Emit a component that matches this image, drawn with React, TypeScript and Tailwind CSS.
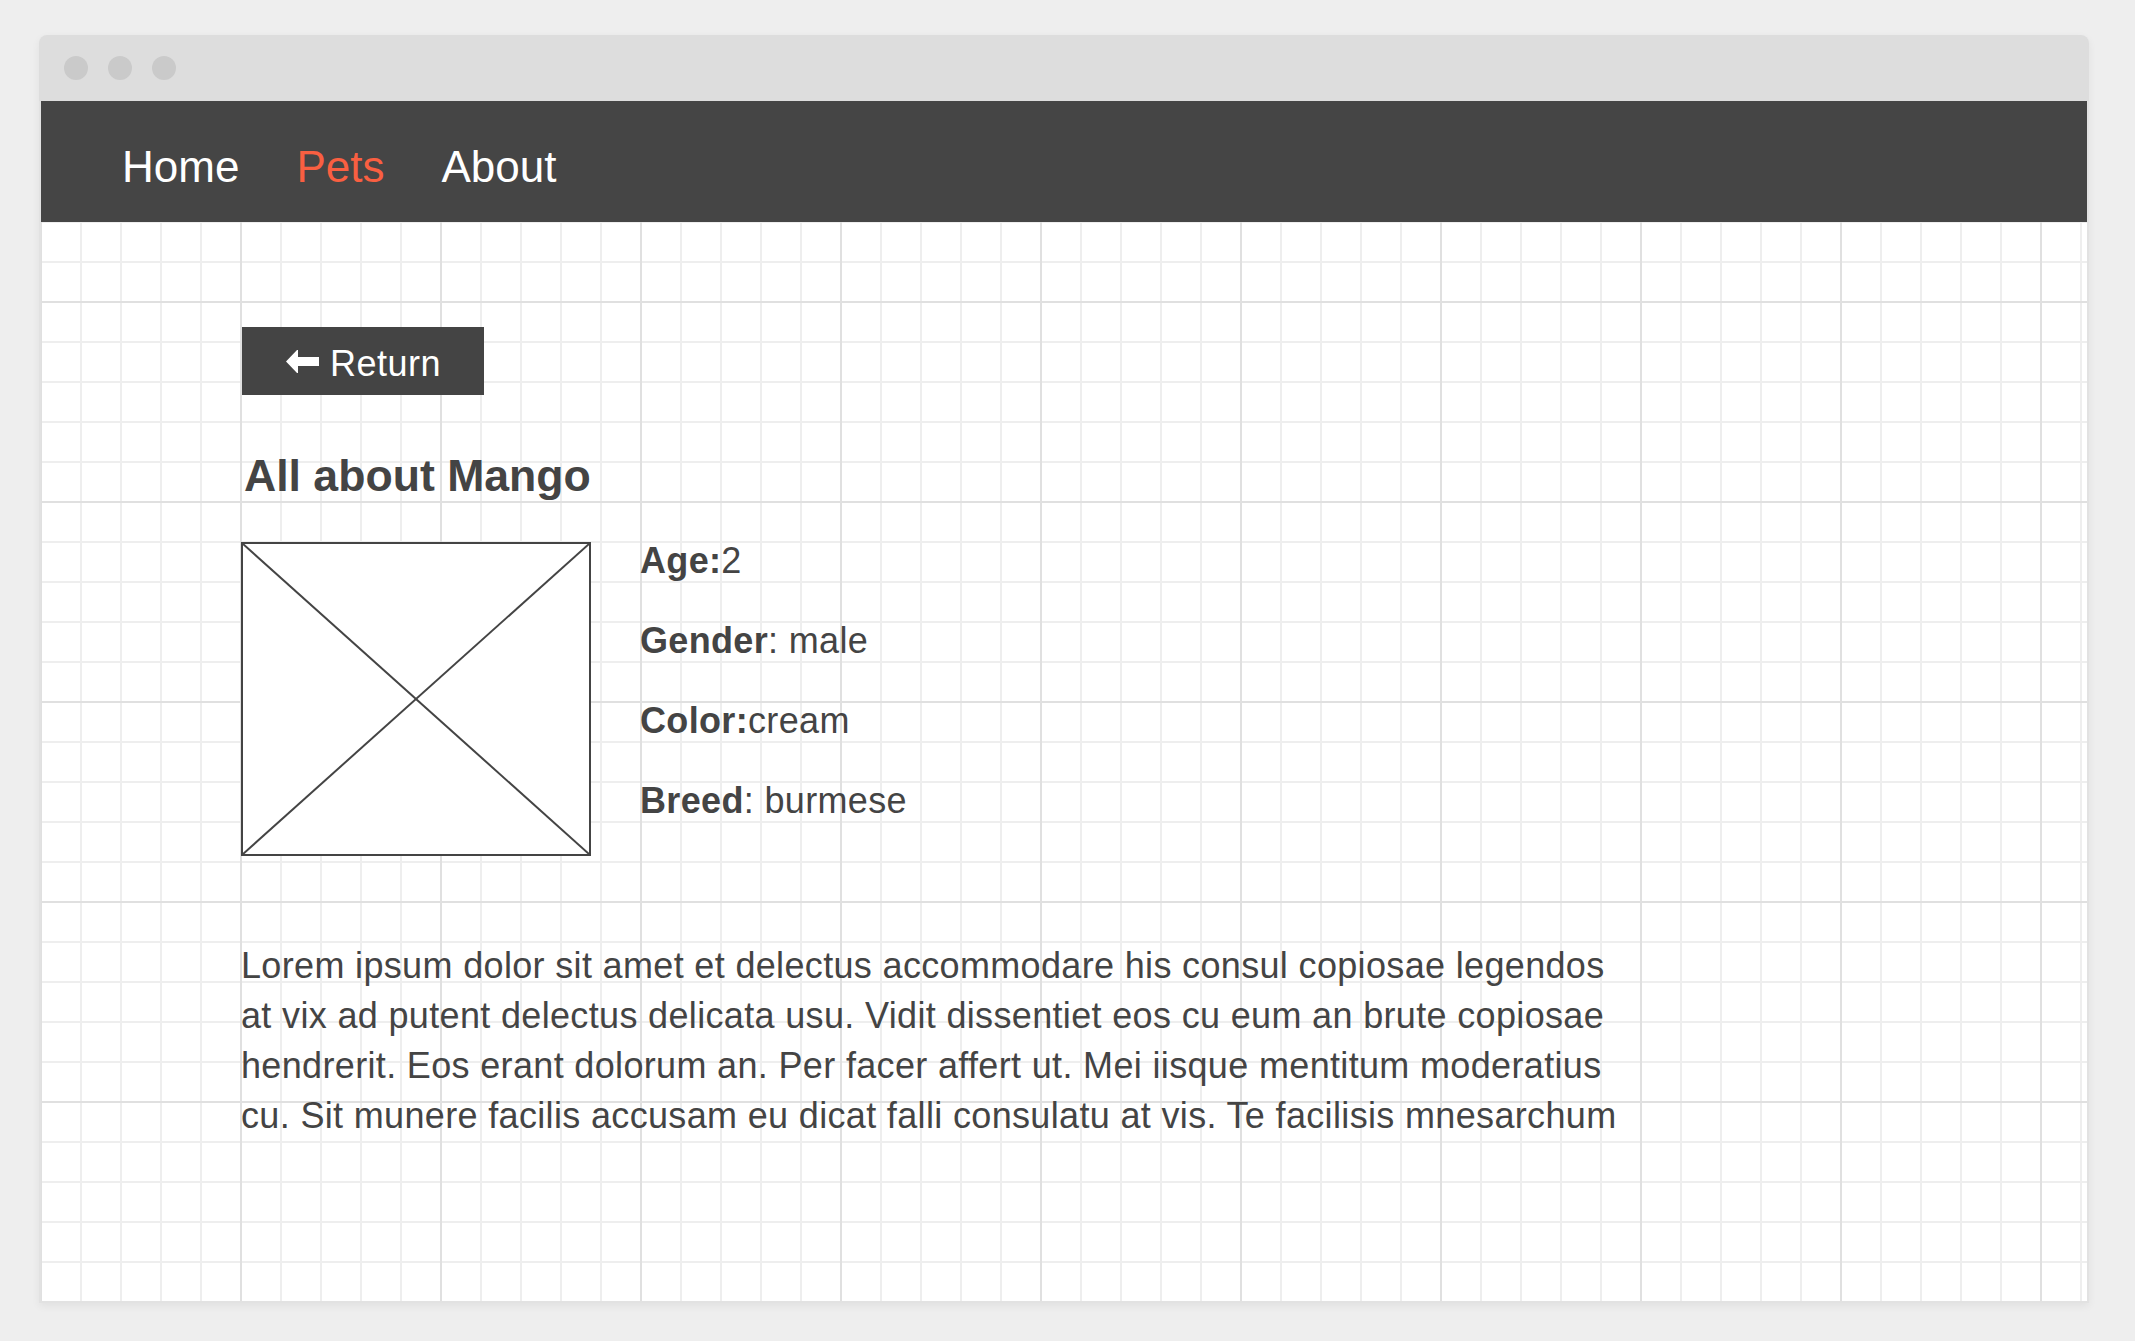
import React from 'react';

const details = [
  { label: 'Age:', value: '2' },
  { label: 'Gender', value: ': male' },
  { label: 'Color:', value: 'cream' },
  { label: 'Breed', value: ': burmese' },
];

const ArrowLeft = () => (
  <svg width="33" height="25" viewBox="0 0 33 25" fill="#ffffff" aria-hidden="true">
    <polygon points="0,12.5 11,1 12,1 12,8 33,8 33,17 12,17 12,24 11,24" />
  </svg>
);

const App: React.FC = () => {
  return (
    <div
      className="w-[2135px] h-[1341px] bg-[#eeeeee] pl-[39px] pt-[35px]"
      style={{ fontFamily: '"Liberation Sans", Arial, sans-serif' }}
    >
      <div className="w-[2050px] shadow-[0_3px_8px_rgba(0,0,0,0.06)] rounded-t-lg">
        {/* Window bar */}
        <div className="h-[66px] bg-[#dddddd] rounded-t-lg flex items-center pl-[25px] gap-[20px]">
          <span className="w-[24px] h-[24px] rounded-full bg-[#cacaca]" />
          <span className="w-[24px] h-[24px] rounded-full bg-[#cacaca]" />
          <span className="w-[24px] h-[24px] rounded-full bg-[#cacaca]" />
        </div>

        {/* Page */}
        <div className="h-[1202px] bg-white border-x-2 border-b-2 border-[#e2e2e2] bg-[linear-gradient(to_right,#e0e0e0_2px,transparent_2px),linear-gradient(to_bottom,#e0e0e0_2px,transparent_2px),linear-gradient(to_right,#eeeeee_2px,transparent_2px),linear-gradient(to_bottom,#eeeeee_2px,transparent_2px)] [background-size:200px_200px,200px_200px,40px_40px,40px_40px] [background-position:-1px_0]">
          <nav className="h-[121px] bg-[#454545] flex items-center pt-[10px] pl-[81px] gap-[57px] text-[44px] leading-none">
            <span className="text-white">Home</span>
            <span className="text-[#f95f41]">Pets</span>
            <span className="text-white">About</span>
          </nav>

          <div className="pl-[200px] pt-[105px] text-[#444444]">
            <button className="ml-[1px] w-[242px] h-[68px] bg-[#444444] flex items-center pl-[44px] gap-[11px] text-white text-[36px] leading-none tracking-[0.5px]">
              <ArrowLeft />
              <span className="pt-[5px]">Return</span>
            </button>

            <h1 className="mt-[56px] text-[44.6px] leading-[50px] font-bold pl-[3px]">All about Mango</h1>

            <div className="mt-[41px] flex items-start gap-[49px]">
              <div className="w-[350px] h-[314px] border-2 border-[#444444] bg-white">
                <svg className="w-full h-full block" viewBox="0 0 346 310" preserveAspectRatio="none">
                  <line x1="0" y1="0" x2="346" y2="310" stroke="#444444" strokeWidth="2" />
                  <line x1="346" y1="0" x2="0" y2="310" stroke="#444444" strokeWidth="2" />
                </svg>
              </div>
              <div className="flex flex-col gap-[40px] -mt-[1px] text-[36px] leading-[40px] tracking-[0.34px]">
                {details.map((d) => (
                  <div key={d.label}>
                    <span className="font-bold">{d.label}</span>
                    <span>{d.value}</span>
                  </div>
                ))}
              </div>
            </div>

            <p className="mt-[85px] w-[1392px] text-[36px] leading-[50px] tracking-[0.34px]">
              Lorem ipsum dolor sit amet et delectus accommodare his consul copiosae legendos at vix ad putent delectus
              delicata usu. Vidit dissentiet eos cu eum an brute copiosae hendrerit. Eos erant dolorum an. Per facer
              affert ut. Mei iisque mentitum moderatius cu. Sit munere facilis accusam eu dicat falli consulatu at vis.
              Te facilisis mnesarchum
            </p>
          </div>
        </div>
      </div>
    </div>
  );
};

export default App;
